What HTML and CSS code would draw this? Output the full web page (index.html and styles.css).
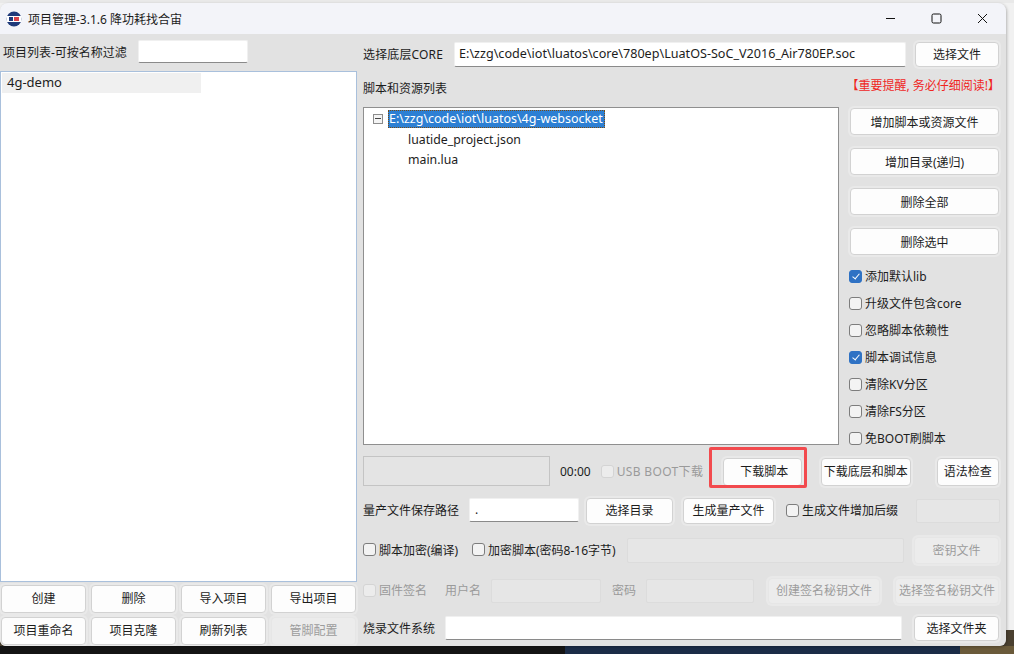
FILE: index.html
```html
<!DOCTYPE html>
<html lang="zh-CN">
    <head>
        <meta charset="UTF-8" />
        <title>项目管理</title>
        <link rel="stylesheet" href="styles.css">
    </head>

    <body>
        <div class="window">
            <div class="titleBar">
                <svg class="logo" width="16" height="16" viewBox="0 0 16 16">
                    <circle cx="8" cy="8" r="7.5" fill="#1f3a7a" />
                    <rect x="0.5" y="5" width="15" height="6" fill="#fff" />
                    <rect x="3" y="6" width="4" height="4" fill="#1f3a7a" />
                    <rect x="8" y="6" width="5" height="4" fill="#d8434a" />
                </svg>
                <span class="titleText">项目管理-3.1.6 降功耗找合宙</span>
                <div class="winControls">
                    <svg width="11" height="11" viewBox="0 0 11 11"><path d="M1 5.5H10" stroke="#111" fill="none" /></svg>
                    <svg width="11" height="11" viewBox="0 0 11 11"><rect x="1" y="1" width="9" height="9" rx="1.5" stroke="#111" fill="none" /></svg>
                    <svg width="11" height="11" viewBox="0 0 11 11"><path d="M1 1L10 10M10 1L1 10" stroke="#111" fill="none" /></svg>
                </div>
            </div>

            <div class="content">
                <div class="leftPanel">
                    <div class="filterRow">
                        <span class="label">项目列表-可按名称过滤</span>
                        <input class="field filterInput" type="text" />
                    </div>
                    <div class="projectList">
                        <div class="projectItem">4g-demo</div>
                    </div>
                    <div class="projectButtons">
                        <button class="btn">创建</button>
                        <button class="btn">删除</button>
                        <button class="btn">导入项目</button>
                        <button class="btn">导出项目</button>
                        <button class="btn">项目重命名</button>
                        <button class="btn">项目克隆</button>
                        <button class="btn">刷新列表</button>
                        <button class="btn" disabled>管脚配置</button>
                    </div>
                </div>

                <div class="rightPanel">
                    <div class="row rowCore">
                        <span class="label labelCore">选择底层CORE</span>
                        <input class="field coreInput" type="text" value="E:\zzg\code\iot\luatos\core\780ep\LuatOS-SoC_V2016_Air780EP.soc" />
                        <button class="btn coreBtn">选择文件</button>
                    </div>

                    <div class="row rowHead">
                        <span class="label">脚本和资源列表</span>
                        <span class="notice">【重要提醒, 务必仔细阅读!】</span>
                    </div>

                    <div class="mainArea">
                        <div class="tree">
                            <div class="treeRoot">
                                <span class="expander"></span>
                                <span class="treeSelected">E:\zzg\code\iot\luatos\4g-websocket</span>
                            </div>
                            <div class="treeChild">luatide_project.json</div>
                            <div class="treeChild">main.lua</div>
                        </div>
                        <div class="sideColumn">
                            <button class="btn sideBtn">增加脚本或资源文件</button>
                            <button class="btn sideBtn">增加目录(递归)</button>
                            <button class="btn sideBtn">删除全部</button>
                            <button class="btn sideBtn">删除选中</button>
                            <div class="sideChecks">
                                <label class="check"><input type="checkbox" checked />添加默认lib</label>
                                <label class="check"><input type="checkbox" />升级文件包含core</label>
                                <label class="check"><input type="checkbox" />忽略脚本依赖性</label>
                                <label class="check"><input type="checkbox" checked />脚本调试信息</label>
                                <label class="check"><input type="checkbox" />清除KV分区</label>
                                <label class="check"><input type="checkbox" />清除FS分区</label>
                                <label class="check"><input type="checkbox" />免BOOT刷脚本</label>
                            </div>
                        </div>
                    </div>

                    <div class="row rowDownload">
                        <div class="progress"></div>
                        <span class="label timer">00:00</span>
                        <label class="check muted usbCheck"><input type="checkbox" disabled />USB BOOT下载</label>
                        <div class="downloadWrap">
                            <button class="btn downloadBtn">下载脚本</button>
                            <div class="redMark"></div>
                        </div>
                        <button class="btn downloadAllBtn">下载底层和脚本</button>
                        <button class="btn syntaxBtn">语法检查</button>
                    </div>

                    <div class="row rowMass">
                        <span class="label labelMass">量产文件保存路径</span>
                        <input class="field massInput" type="text" value="." />
                        <button class="btn dirBtn">选择目录</button>
                        <button class="btn massBtn">生成量产文件</button>
                        <label class="check suffixCheck"><input type="checkbox" />生成文件增加后缀</label>
                        <input class="field suffixInput" type="text" disabled />
                    </div>

                    <div class="row rowEncrypt">
                        <label class="check encryptCheck"><input type="checkbox" />脚本加密(编译)</label>
                        <label class="check passCheck"><input type="checkbox" />加密脚本(密码8-16字节)</label>
                        <input class="field keyInput" type="text" disabled />
                        <button class="btn keyBtn" disabled>密钥文件</button>
                    </div>

                    <div class="row rowSign">
                        <label class="check muted signCheck"><input type="checkbox" disabled />固件签名</label>
                        <span class="label muted userLabel">用户名</span>
                        <input class="field userInput" type="text" disabled />
                        <span class="label muted pwdLabel">密码</span>
                        <input class="field pwdInput" type="text" disabled />
                        <button class="btn createKeyBtn" disabled>创建签名秘钥文件</button>
                        <button class="btn pickKeyBtn" disabled>选择签名秘钥文件</button>
                    </div>

                    <div class="row rowBurn">
                        <span class="label labelBurn">烧录文件系统</span>
                        <input class="field burnInput" type="text" />
                        <button class="btn burnBtn">选择文件夹</button>
                    </div>
                </div>
            </div>
        </div>
    </body>
</html>
```

FILE: styles.css
```css
* {
    box-sizing: border-box;
}
html, body {
    margin: 0;
    height: 654px;
    overflow: hidden;
}
body {
    padding-top: 3px;
    font-family: "Noto Sans", "Noto Sans CJK SC", sans-serif;
    font-size: 12px;
    color: #1c1c1c;
    background:
        linear-gradient(90deg, #141414 0 565px, #1b2c47 565px 960px, #6a5a3a 960px) 0 646px / 100% 8px no-repeat,
        linear-gradient(#e9e9e9 0 3px, #f1f1f1 3px 630px, #4a4030 630px);
}
.window {
    width: 1006px;
    height: 643px;
    background-color: #e2e2e2;
    border-radius: 8px 8px 6px 6px;
    overflow: hidden;
    box-shadow: 1px 1px 3px rgba(0, 0, 0, 0.25);
}

/* title bar */
.titleBar {
    height: 31px;
    display: flex;
    align-items: center;
    padding-left: 6px;
    background-color: #f3f4f9;
}
.logo {
    flex: none;
}
.titleText {
    margin-left: 6px;
    font-size: 12px;
}
.winControls {
    margin-left: auto;
    margin-right: 18px;
    display: flex;
    gap: 35px;
}

.content {
    display: flex;
}
.label {
    white-space: nowrap;
}
.muted {
    color: #9a9a9a;
}

/* left side */
.leftPanel {
    width: 357px;
    flex: none;
}
.filterRow {
    display: flex;
    align-items: center;
    height: 23px;
    margin-top: 6px;
    padding-left: 3px;
}
.filterInput {
    width: 110px;
    margin-left: 11px;
    border-bottom-color: #bbb;
}
.projectList {
    height: 511px;
    margin-top: 8px;
    padding: 1px;
    background-color: #fff;
    border: 1px solid #a9c0dc;
}
.projectItem {
    width: 199px;
    height: 20px;
    line-height: 19px;
    padding-left: 5px;
    font-size: 13px;
    background-color: #f0f0f0;
}
.projectButtons {
    display: grid;
    grid-template-columns: repeat(4, 85px);
    grid-auto-rows: 28px;
    column-gap: 5px;
    row-gap: 4px;
    margin-top: 3px;
    padding-left: 1px;
}

/* common controls */
.btn {
    height: 100%;
    padding: 0 0 2px;
    font-family: inherit;
    font-size: 12px;
    color: #1c1c1c;
    white-space: nowrap;
    background-color: #fdfdfd;
    border: 1px solid #d2d2d2;
    border-radius: 4px;
    box-shadow: 0 0 0 2px #e9e9e9;
}
.btn:disabled {
    color: #9c9c9c;
    background-color: #ececec;
    border-color: #e6e6e6;
}
.field {
    height: 100%;
    padding: 0 5px 2px;
    font-family: inherit;
    font-size: 12px;
    color: #1c1c1c;
    background-color: #fff;
    border: 1px solid #f0f0f0;
    border-bottom-color: #8a8a8a;
    border-radius: 2px;
    outline: none;
}
.field:disabled {
    background-color: #e6e6e6;
    border-color: #dcdcdc;
}
.check {
    display: flex;
    align-items: center;
    white-space: nowrap;
}
.check input {
    appearance: none;
    position: relative;
    flex: none;
    width: 13px;
    height: 13px;
    margin: 0 3px 0 0;
    background-color: #f3f3f3;
    border: 1px solid #7d7d7d;
    border-radius: 3px;
}
.check input:checked {
    background-color: #2f72c4;
    border-color: #2f72c4;
}
.check input:checked::after {
    content: "";
    position: absolute;
    left: 3.5px;
    top: 1.5px;
    width: 3px;
    height: 6px;
    border: solid #fff;
    border-width: 0 1px 1px 0;
    transform: rotate(40deg);
}
.check input:disabled {
    background-color: #ececec;
    border-color: #d4d4d4;
}

/* right side */
.rightPanel {
    flex: 1;
    padding: 0 7px 0 6px;
}
.row {
    display: flex;
    align-items: center;
}
.rowCore > .label,
.rowMass > .label,
.rowMass > .check,
.rowEncrypt > .check,
.rowSign > .label,
.rowSign > .check,
.rowBurn > .label {
    margin-bottom: 2px;
}
.rowCore {
    height: 25px;
    margin-top: 8px;
}
.labelCore {
    width: 91px;
    letter-spacing: 0.15px;
}
.coreInput {
    width: 452px;
    padding-left: 4px;
    font-size: 12.6px;
}
.coreBtn {
    width: 84px;
    margin-left: 9px;
}
.rowHead {
    height: 20px;
    margin-top: 11px;
    justify-content: space-between;
}
.notice {
    color: #f0261f;
    margin-top: -6px;
}

.mainArea {
    display: flex;
    height: 338px;
    margin-top: 9px;
}
.tree {
    width: 476px;
    flex: none;
    padding-top: 1px;
    font-size: 12.5px;
    background-color: #fff;
    border: 1px solid #8f8f8f;
}
.treeRoot {
    display: flex;
    align-items: center;
    height: 20px;
    padding-left: 9px;
}
.expander {
    position: relative;
    width: 10px;
    height: 10px;
    background-color: #f4f4f4;
    border: 1px solid #8c8c8c;
}
.expander::after {
    content: "";
    position: absolute;
    left: 1px;
    top: 3px;
    width: 6px;
    height: 2px;
    border-top: 1px solid #444;
}
.treeSelected {
    margin-left: 5px;
    height: 18px;
    line-height: 15px;
    padding: 0 1px 0 0;
    color: #fff;
    background-color: #2d7fd3;
    border: 1px dotted #7a4a10;
}
.treeChild {
    height: 20px;
    line-height: 22px;
    padding-left: 44px;
    font-size: 12.3px;
}
.sideColumn {
    width: 149px;
    margin-left: 11px;
    padding-top: 1px;
}
.sideBtn {
    display: block;
    width: 100%;
    height: 27px;
    margin-bottom: 13px;
    padding: 0;
}
.sideChecks {
    display: flex;
    flex-direction: column;
    gap: 11px;
    margin-left: -1px;
}
.sideChecks .check {
    height: 16px;
}

.rowDownload {
    height: 30px;
    margin-top: 11px;
}
.progress {
    width: 187px;
    height: 30px;
    background-color: #e4e4e4;
    border: 1px solid #c4c4c4;
}
.timer {
    margin-left: 10px;
}
.usbCheck {
    margin-left: 10px;
    width: 122px;
    letter-spacing: 0.35px;
}
.downloadWrap {
    position: relative;
    width: 79px;
    height: 28px;
    margin-top: 2px;
}
.downloadBtn {
    width: 100%;
    padding-left: 4px;
}
.redMark {
    position: absolute;
    left: -14px;
    top: -11px;
    width: 98px;
    height: 41px;
    border: 3px solid #f24a4e;
    border-radius: 2px;
}
.downloadAllBtn {
    width: 90px;
    height: 28px;
    margin-top: 2px;
    margin-left: 19px;
}
.syntaxBtn {
    width: 62px;
    height: 28px;
    margin-top: 2px;
    margin-left: 26px;
}

.rowMass {
    height: 26px;
    margin-top: 12px;
}
.labelMass {
    width: 106px;
}
.massInput {
    width: 110px;
    height: 24px;
    align-self: flex-start;
}
.dirBtn {
    width: 87px;
    margin-left: 7px;
}
.massBtn {
    width: 91px;
    margin-left: 10px;
}
.suffixCheck {
    margin-left: 12px;
    width: 130px;
}
.suffixInput {
    width: 84px;
    height: 24px;
    align-self: flex-start;
    margin-top: 1px;
}

.rowEncrypt {
    height: 27px;
    margin-top: 13px;
}
.encryptCheck {
    width: 109px;
}
.passCheck {
    width: 155px;
}
.keyInput {
    width: 277px;
    height: 25px;
}
.keyBtn {
    width: 85px;
    margin-left: 10px;
}

.rowSign {
    height: 26px;
    margin-top: 14px;
}
.signCheck {
    width: 82px;
}
.userLabel {
    width: 46px;
}
.userInput {
    width: 110px;
    height: 24px;
}
.pwdLabel {
    width: 45px;
    padding-left: 11px;
}
.pwdInput {
    width: 108px;
    height: 24px;
}
.createKeyBtn {
    width: 112px;
    margin-left: 14px;
}
.pickKeyBtn {
    width: 104px;
    margin-left: 15px;
}

.rowBurn {
    height: 25px;
    margin-top: 12px;
}
.labelBurn {
    width: 82px;
}
.burnInput {
    width: 457px;
    height: 24px;
    align-self: flex-start;
}
.burnBtn {
    width: 85px;
    margin-left: 12px;
}
```
